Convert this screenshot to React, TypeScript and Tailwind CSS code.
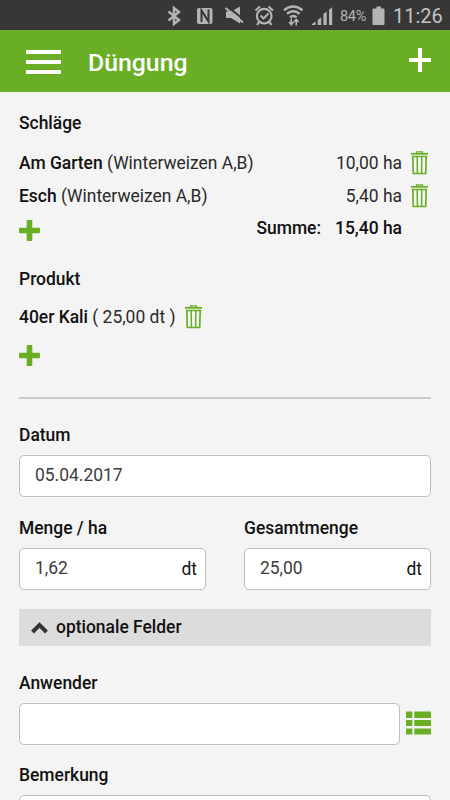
import { ReactNode } from "react";

const StatusBar = () => (
  <div className="flex h-[30px] shrink-0 bg-[#373737] text-[#b4b4b4]">
    <svg width="370" height="30" viewBox="0 0 370 30" fill="none" className="-mr-[30px] shrink-0">
      {/* bluetooth */}
      <path d="M168.5 11.5l10.500 8.500-5 4V8l5 4-10.500 8.500" stroke="currentColor" strokeWidth="2.400" />
      {/* nfc */}
      <rect x="197" y="8" width="15.500" height="16" rx="2" fill="currentColor" />
      <path d="M201.500 22v-11.500l7 11V9.500" stroke="#373737" strokeWidth="2" />
      {/* sound off */}
      <path d="M226 11.500h5l9-5v17l-9-5.500h-5z" fill="currentColor" />
      <path d="M227.500 6.500l18 14.500" stroke="#373737" strokeWidth="2.200" />
      <path d="M225.500 8l17.500 14.500" stroke="currentColor" strokeWidth="2.200" />
      {/* alarm */}
      <circle cx="264.200" cy="16.200" r="7.300" stroke="currentColor" strokeWidth="2.200" />
      <path d="M260.500 15.500l3 3 5-5" stroke="currentColor" strokeWidth="2" />
      <path d="M255.500 10.500l4.500-4M273 10.500l-4.500-4M259 22l-2 3M269.500 22l2 3" stroke="currentColor" strokeWidth="2.200" />
      {/* wifi */}
      <path
        d="M284 10.200q9-7.400 18.500 0M287 13.800q6.300-5 12.600 0M290 17.300q3.300-2.600 6.600 0"
        stroke="currentColor"
        strokeWidth="2.400"
      />
      <path
        d="M291.300 18.500v6M289 22l2.300 2.700 2.300-2.700M296.300 25.500v-6M294 22l2.300-2.500 2.300 2.500"
        stroke="currentColor"
        strokeWidth="1.600"
      />
      {/* signal */}
      <path
        d="M312 25v-1l3.600-2.500V25zM317.700 25v-5l3.500-2.700V25zM323.400 25V14l3.300-2.600V25zM329 25V9.800l3.200-2.600V25z"
        fill="currentColor"
      />
    </svg>
    <span className="mt-[9px] w-[27px] text-[14.500px] leading-4 tracking-[-0.300px]">84%</span>
    <svg width="14" height="30" viewBox="0 0 14 30" fill="currentColor" className="ml-[5px]">
      <path d="M4.500 6.500H9v2h2.500a1 1 0 0 1 1 1V24a1 1 0 0 1-1 1h-10a1 1 0 0 1-1-1V9.500a1 1 0 0 1 1-1h3z" />
    </svg>
    <span className="ml-[7px] mt-[4px] text-[20px] leading-6 text-[#c4c4c4]">11:26</span>
  </div>
);

const Header = () => (
  <header className="flex h-[62px] shrink-0 items-center bg-[#6aae26] pr-[19px] pl-[26px] text-white">
    <button className="mt-0.5 flex w-[35px] flex-col gap-1.5" aria-label="Menü">
      <span className="h-1 w-full bg-white" />
      <span className="h-1 w-full bg-white" />
      <span className="h-1 w-full bg-white" />
    </button>
    <h1 className="mt-[3px] ml-[27px] text-[24.800px] font-medium">Düngung</h1>
    <svg width="22" height="24" viewBox="0 0 22 24" fill="currentColor" className="mb-0.5 ml-auto">
      <path d="M9 0h4v10h9v4h-9v10H9V14H0v-4h9z" />
    </svg>
  </header>
);

const TrashIcon = () => (
  <svg width="17" height="24" viewBox="0 0 17 24" fill="none" stroke="#6aae26" className="shrink-0">
    <path d="M5.500 2V.8h6V2" strokeWidth="1.200" />
    <path d="M0 2.800h17" strokeWidth="1.800" />
    <path d="M.8 5.500h15.400" strokeWidth="1.500" />
    <path d="M1.800 5.500l.5 17h12.400l.5-17" strokeWidth="1.700" />
    <path d="M6.200 5.500l.2 17M10.800 5.500l-.2 17" strokeWidth="1.500" />
  </svg>
);

const PlusIcon = () => (
  <svg width="21" height="21" viewBox="0 0 21 21" fill="#6aae26">
    <path d="M8.700 0h3.600q1 0 1 1v6.700H20q1 0 1 1v3.600q0 1-1 1h-6.700V20q0 1-1 1H8.700q-1 0-1-1v-6.700H1q-1 0-1-1V8.700q0-1 1-1h6.700V1q0-1 1-1z" />
  </svg>
);

const ListIcon = () => (
  <svg width="25" height="24" viewBox="0 0 25 24" fill="#6aae26" className="mb-0.5 shrink-0">
    <path d="M0 .500h6.300V7H0zM8.300 .500H25V7H8.300zM0 9h6.300v6H0zM8.300 9H25v6H8.300zM0 17.500h6.300v6H0zM8.300 17.500H25v6H8.300z" />
  </svg>
);

type FieldRowProps = {
  name: string;
  crop: string;
  area: string;
};

const FieldRow = ({ name, crop, area }: FieldRowProps) => (
  <div className="flex h-[32.500px] items-center pr-[3px]">
    <span className="text-[#2a2a2a]">
      <b className="font-medium text-[#111]">{name}</b> ({crop})
    </span>
    <span className="mr-[9px] ml-auto text-[#2a2a2a]">{area}</span>
    <TrashIcon />
  </div>
);

type InputProps = {
  label: string;
  value?: string;
  unit?: string;
  children?: ReactNode;
};

const Input = ({ label, value = "", unit, children }: InputProps) => (
  <div className="flex min-w-0 flex-1 flex-col">
    <label className="mb-2 font-medium">{label}</label>
    <div className="flex items-center gap-1.5">
      <div className="flex h-[42px] flex-1 items-center justify-between rounded-[5px] border border-[#bdbdbd] bg-white pr-2 pl-[15px]">
        <span className="pb-[3px] text-[#3c3c3c]">{value}</span>
        {unit && <span>{unit}</span>}
      </div>
      {children}
    </div>
  </div>
);

const App = () => {
  return (
    <div className="flex h-[800px] w-[450px] flex-col overflow-hidden bg-[#f4f4f4] font-[Roboto,sans-serif] text-[17.450px] leading-6 text-[#111]">
      <StatusBar />
      <Header />
      <main className="flex flex-col px-[19px] pt-[19px]">
        <h2 className="mb-[12px] font-medium">Schläge</h2>
        <FieldRow name="Am Garten" crop="Winterweizen A,B" area="10,00 ha" />
        <FieldRow name="Esch" crop="Winterweizen A,B" area="5,40 ha" />
        <div className="flex h-[33px] justify-between pr-[29px] font-medium">
          <div className="pt-[8px]">
            <PlusIcon />
          </div>
          <div className="flex gap-[14px] pt-1">
            <span>Summe:</span>
            <span>15,40 ha</span>
          </div>
        </div>

        <h2 className="mt-[22px] font-medium">Produkt</h2>
        <div className="mt-[14px] flex h-6 items-center gap-[10px]">
          <span className="text-[#2a2a2a]">
            <b className="font-medium text-[#111]">40er Kali</b> ( 25,00 dt )
          </span>
          <TrashIcon />
        </div>
        <div className="mt-[16px]">
          <PlusIcon />
        </div>

        <hr className="mt-[31px] mb-[24px] border-t-2 border-[#cacaca]" />

        <Input label="Datum" value="05.04.2017" />
        <div className="mt-[19px] flex gap-[38px]">
          <Input label="Menge / ha" value="1,62" unit="dt" />
          <Input label="Gesamtmenge" value="25,00" unit="dt" />
        </div>

        <button className="mt-[19px] mb-[25px] flex h-[37px] items-center gap-[8px] bg-[#dcdcdc] pl-3 font-medium">
          <svg width="17" height="12" viewBox="0 0 17 12" fill="none" stroke="#333" strokeWidth="4">
            <path d="M1.500 10l7-7 7 7" />
          </svg>
          <span className="pb-0.5">optionale Felder</span>
        </button>

        <Input label="Anwender">
          <ListIcon />
        </Input>
        <div className="mt-[18px] flex">
          <Input label="Bemerkung" />
        </div>
      </main>
    </div>
  );
};

export default App;
